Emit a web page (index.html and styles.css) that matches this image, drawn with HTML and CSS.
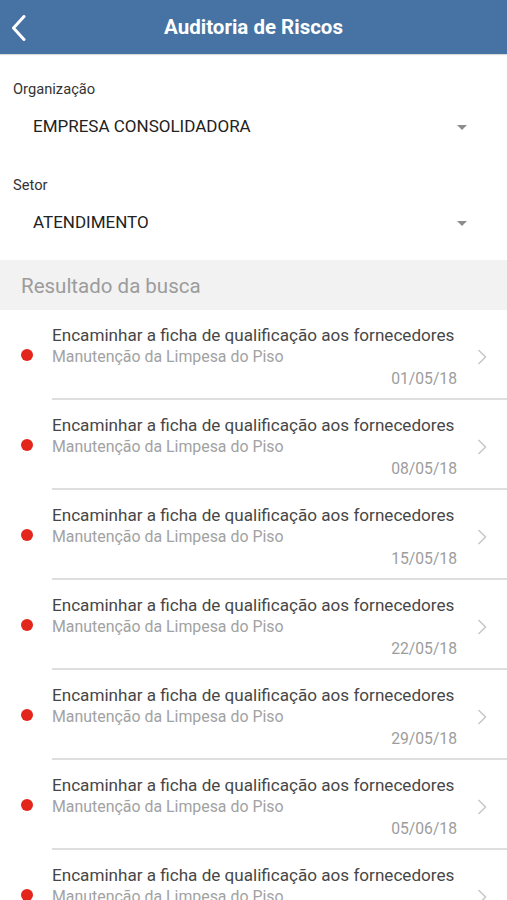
FILE: index.html
```html
<!DOCTYPE html>
<html lang="pt-BR">
<head>
  <meta charset="UTF-8">
  <title>Auditoria de Riscos</title>
  <link rel="stylesheet" href="styles.css">
</head>
<body>

  <div class="topbar">
    <a class="back" href="#">
      <svg width="16" height="26" viewBox="0 0 16 26"><path d="M13 1.5 L2.5 13 L13 24.5" fill="none" stroke="#fff" stroke-width="3" stroke-linecap="round" stroke-linejoin="round"/></svg>
    </a>
    <h1>Auditoria de Riscos</h1>
  </div>

  <div class="filters">
    <div class="field">
      <div class="field-label">Organização</div>
      <div class="select">
        <span>EMPRESA CONSOLIDADORA</span>
        <i class="caret"></i>
      </div>
    </div>
    <div class="field">
      <div class="field-label">Setor</div>
      <div class="select">
        <span>ATENDIMENTO</span>
        <i class="caret"></i>
      </div>
    </div>
  </div>

  <div class="section-title">Resultado da busca</div>

  <ul class="results">
    <li class="item">
      <span class="dot"></span>
      <div class="item-body">
        <div class="item-text">
          <div class="item-title">Encaminhar a ficha de qualificação aos fornecedores</div>
          <div class="item-sub">Manutenção da Limpesa do Piso</div>
          <div class="item-date">01/05/18</div>
        </div>
        <svg class="chev" width="10" height="16" viewBox="0 0 10 16"><path d="M1.5 1 L8.5 8 L1.5 15" fill="none" stroke="#c9c9c9" stroke-width="1.6"/></svg>
      </div>
    </li>
    <li class="item">
      <span class="dot"></span>
      <div class="item-body">
        <div class="item-text">
          <div class="item-title">Encaminhar a ficha de qualificação aos fornecedores</div>
          <div class="item-sub">Manutenção da Limpesa do Piso</div>
          <div class="item-date">08/05/18</div>
        </div>
        <svg class="chev" width="10" height="16" viewBox="0 0 10 16"><path d="M1.5 1 L8.5 8 L1.5 15" fill="none" stroke="#c9c9c9" stroke-width="1.6"/></svg>
      </div>
    </li>
    <li class="item">
      <span class="dot"></span>
      <div class="item-body">
        <div class="item-text">
          <div class="item-title">Encaminhar a ficha de qualificação aos fornecedores</div>
          <div class="item-sub">Manutenção da Limpesa do Piso</div>
          <div class="item-date">15/05/18</div>
        </div>
        <svg class="chev" width="10" height="16" viewBox="0 0 10 16"><path d="M1.5 1 L8.5 8 L1.5 15" fill="none" stroke="#c9c9c9" stroke-width="1.6"/></svg>
      </div>
    </li>
    <li class="item">
      <span class="dot"></span>
      <div class="item-body">
        <div class="item-text">
          <div class="item-title">Encaminhar a ficha de qualificação aos fornecedores</div>
          <div class="item-sub">Manutenção da Limpesa do Piso</div>
          <div class="item-date">22/05/18</div>
        </div>
        <svg class="chev" width="10" height="16" viewBox="0 0 10 16"><path d="M1.5 1 L8.5 8 L1.5 15" fill="none" stroke="#c9c9c9" stroke-width="1.6"/></svg>
      </div>
    </li>
    <li class="item">
      <span class="dot"></span>
      <div class="item-body">
        <div class="item-text">
          <div class="item-title">Encaminhar a ficha de qualificação aos fornecedores</div>
          <div class="item-sub">Manutenção da Limpesa do Piso</div>
          <div class="item-date">29/05/18</div>
        </div>
        <svg class="chev" width="10" height="16" viewBox="0 0 10 16"><path d="M1.5 1 L8.5 8 L1.5 15" fill="none" stroke="#c9c9c9" stroke-width="1.6"/></svg>
      </div>
    </li>
    <li class="item">
      <span class="dot"></span>
      <div class="item-body">
        <div class="item-text">
          <div class="item-title">Encaminhar a ficha de qualificação aos fornecedores</div>
          <div class="item-sub">Manutenção da Limpesa do Piso</div>
          <div class="item-date">05/06/18</div>
        </div>
        <svg class="chev" width="10" height="16" viewBox="0 0 10 16"><path d="M1.5 1 L8.5 8 L1.5 15" fill="none" stroke="#c9c9c9" stroke-width="1.6"/></svg>
      </div>
    </li>
    <li class="item">
      <span class="dot"></span>
      <div class="item-body">
        <div class="item-text">
          <div class="item-title">Encaminhar a ficha de qualificação aos fornecedores</div>
          <div class="item-sub">Manutenção da Limpesa do Piso</div>
          <div class="item-date">12/06/18</div>
        </div>
        <svg class="chev" width="10" height="16" viewBox="0 0 10 16"><path d="M1.5 1 L8.5 8 L1.5 15" fill="none" stroke="#c9c9c9" stroke-width="1.6"/></svg>
      </div>
    </li>
  </ul>

</body>
</html>
```

FILE: styles.css
```css
body {
  margin: 0;
  font-family: Roboto, 'Noto Sans', sans-serif;
  background: #fff;
  color: #333;
  overflow: hidden;
}

.topbar {
  height: 54px;
  background: #4673a4;
  display: flex;
  align-items: center;
  justify-content: center;
  position: relative;
  box-shadow: 0 1px 1px rgba(0,0,0,0.15);
}

.topbar h1 {
  margin: 0;
  font-size: 20.5px;
  font-weight: bold;
  color: #fff;
}

.back {
  position: absolute;
  left: 11px;
  top: 15px;
  display: flex;
}

.filters {
  padding: 25px 0 19px;
}

.field {
  padding: 0 13px;
}

.field + .field {
  margin-top: 30px;
}

.field-label {
  font-size: 14.7px;
  line-height: 20px;
  color: #333;
}

.select {
  margin-top: 8px;
  height: 38px;
  display: flex;
  align-items: center;
  justify-content: space-between;
  padding: 0 27px 0 20px;
  font-size: 17px;
  color: #222;
}

.caret {
  width: 0;
  height: 0;
  border-left: 5.5px solid transparent;
  border-right: 5.5px solid transparent;
  border-top: 5.5px solid #8c8c8c;
  margin-top: 2px;
}

.section-title {
  height: 50px;
  line-height: 52px;
  background: #f2f2f2;
  padding-left: 21px;
  font-size: 20.5px;
  color: #9c9c9c;
}

.results {
  list-style: none;
  margin: 0;
  padding: 0;
}

.item {
  display: flex;
  align-items: center;
}

.dot {
  width: 12px;
  height: 12px;
  border-radius: 50%;
  background: #e3261b;
  margin: 0 19px 0 21px;
  flex-shrink: 0;
}

.item-body {
  flex: 1;
  display: flex;
  align-items: center;
  padding: 14px 0 8px;
  border-bottom: 2px solid #dedede;
}

.item-text {
  width: 405px;
}

.item-title {
  font-size: 17.1px;
  line-height: 22px;
  color: #474747;
  white-space: nowrap;
}

.item-sub {
  font-size: 15.9px;
  line-height: 22px;
  color: #a2a2a2;
}

.item-date {
  font-size: 15.7px;
  line-height: 22px;
  color: #9d9d9d;
  text-align: right;
}

.chev {
  margin-left: 20px;
}
```
